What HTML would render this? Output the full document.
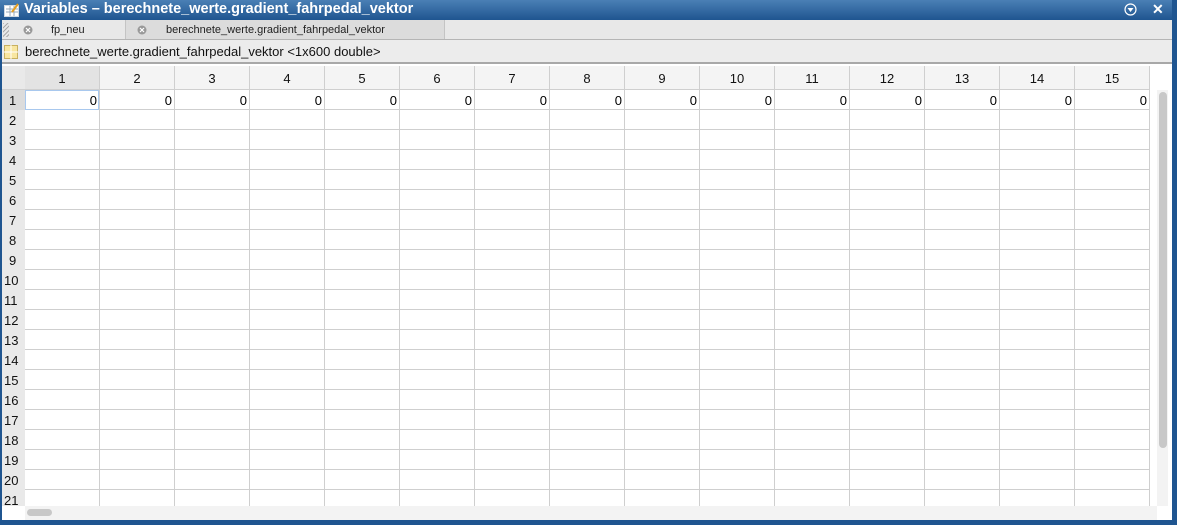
<!DOCTYPE html>
<html><head><meta charset="utf-8"><style>
*{margin:0;padding:0;box-sizing:border-box}
body{width:1177px;height:525px;overflow:hidden;background:#fff;font-family:"Liberation Sans",sans-serif;position:relative}
.title{position:absolute;left:0;top:0;width:1177px;height:20px;background:linear-gradient(#4a7fb5,#1f5590);color:#fff;font-weight:bold;font-size:14.5px;line-height:19px}
.tabs{position:absolute;left:0;top:20px;width:1172px;height:20px;background:#e8e8e8;border-bottom:1px solid #b5b5b5;font-size:11px;line-height:19px;color:#222}
.hdr{position:absolute;left:0;top:40px;width:1172px;height:24px;background:#ececec;border-bottom:2px solid #a8a8a8;font-size:13px;line-height:24px;color:#111}
.rb{position:absolute;right:0;top:0;width:5px;height:525px;background:#1f5590}
.bb{position:absolute;left:0;bottom:0;width:1177px;height:5px;background:#1f5590}
.lb{position:absolute;left:0;top:20px;width:2px;height:505px;background:#1f5590}
</style></head><body>
<div class="title"><svg style="position:absolute;left:4px;top:3px" width="16" height="14"><rect x="0.5" y="2.5" width="14" height="11" fill="#fff" stroke="#cfd8e2"/><path d="M2 6h12M2 9h12M6 3v10M10 3v10" stroke="#9ab"/><path d="M8 9L14 1" stroke="#e8a020" stroke-width="2"/></svg><span style="position:absolute;left:24px;top:0">Variables – berechnete_werte.gradient_fahrpedal_vektor</span>
<svg style="position:absolute;left:1124px;top:3px" width="13" height="13"><circle cx="6.5" cy="6.5" r="5.5" fill="none" stroke="#fff" stroke-width="1.2"/><path d="M3.5 5h6l-3 4z" fill="#fff"/></svg>
<span style="position:absolute;left:1152px;top:0;font-size:14px">✕</span></div>
<div class="tabs">
<div style="position:absolute;left:3px;top:3px;width:6px;height:14px;background:repeating-linear-gradient(135deg,#aaa 0 1px,transparent 1px 3px)"></div>
<div style="position:absolute;left:125px;top:0;width:320px;height:19px;background:#dcdcdc;border-left:1px solid #c4c4c4;border-right:1px solid #c4c4c4"></div>
<svg style="position:absolute;left:23px;top:5px" width="10" height="10"><circle cx="5" cy="5" r="4.5" fill="#999"/><path d="M3 3l4 4M7 3l-4 4" stroke="#fff" stroke-width="1.2"/></svg>
<span style="position:absolute;left:51px;top:1px">fp_neu</span>
<svg style="position:absolute;left:137px;top:5px" width="10" height="10"><circle cx="5" cy="5" r="4.5" fill="#999"/><path d="M3 3l4 4M7 3l-4 4" stroke="#fff" stroke-width="1.2"/></svg>
<span style="position:absolute;left:166px;top:1px">berechnete_werte.gradient_fahrpedal_vektor</span></div>
<div class="hdr"><svg style="position:absolute;left:4px;top:5px" width="14" height="14"><rect x="0.5" y="0.5" width="13" height="13" fill="#f8e6a0" stroke="#c8b060"/><path d="M7 0v14M0 7h14" stroke="#fff"/></svg><span style="position:absolute;left:25px;top:0">berechnete_werte.gradient_fahrpedal_vektor &lt;1x600 double&gt;</span></div>
<svg style="position:absolute;left:0;top:66px" width="1172" height="454" font-family="Liberation Sans" font-size="13">
<rect x="2" y="0" width="1148" height="23" fill="#f4f4f4"/>
<rect x="2" y="0" width="23" height="440" fill="#e9e9e9"/>
<rect x="25" y="0" width="75" height="23" fill="#e3e3e3"/>
<rect x="2" y="24" width="23" height="20" fill="#dcdcdc"/>
<g stroke="#cfcfcf" stroke-width="1">
<path d="M2 23.5H1150"/>
<path d="M25 43.5H1150M25 63.5H1150M25 83.5H1150M25 103.5H1150M25 123.5H1150M25 143.5H1150M25 163.5H1150M25 183.5H1150M25 203.5H1150M25 223.5H1150M25 243.5H1150M25 263.5H1150M25 283.5H1150M25 303.5H1150M25 323.5H1150M25 343.5H1150M25 363.5H1150M25 383.5H1150M25 403.5H1150M25 423.5H1150"/>
<path d="M99.5 0V440M174.5 0V440M249.5 0V440M324.5 0V440M399.5 0V440M474.5 0V440M549.5 0V440M624.5 0V440M699.5 0V440M774.5 0V440M849.5 0V440M924.5 0V440M999.5 0V440M1074.5 0V440M1149.5 0V440"/>
</g>
<rect x="25.5" y="24.5" width="73" height="19" fill="none" stroke="#a8c8ee"/>
<g text-anchor="middle" fill="#111">
<text x="62" y="17">1</text><text x="137" y="17">2</text><text x="212" y="17">3</text><text x="287" y="17">4</text><text x="362" y="17">5</text><text x="437" y="17">6</text><text x="512" y="17">7</text><text x="587" y="17">8</text><text x="662" y="17">9</text><text x="737" y="17">10</text><text x="812" y="17">11</text><text x="887" y="17">12</text><text x="962" y="17">13</text><text x="1037" y="17">14</text><text x="1112" y="17">15</text>
</g>
<g text-anchor="end" fill="#000">
<text x="97" y="39">0</text><text x="172" y="39">0</text><text x="247" y="39">0</text><text x="322" y="39">0</text><text x="397" y="39">0</text><text x="472" y="39">0</text><text x="547" y="39">0</text><text x="622" y="39">0</text><text x="697" y="39">0</text><text x="772" y="39">0</text><text x="847" y="39">0</text><text x="922" y="39">0</text><text x="997" y="39">0</text><text x="1072" y="39">0</text><text x="1147" y="39">0</text>
</g>
<g fill="#111">
<text x="9" y="39">1</text><text x="9" y="59">2</text><text x="9" y="79">3</text><text x="9" y="99">4</text><text x="9" y="119">5</text><text x="9" y="139">6</text><text x="9" y="159">7</text><text x="9" y="179">8</text><text x="9" y="199">9</text><text x="4" y="219">10</text><text x="4" y="239">11</text><text x="4" y="259">12</text><text x="4" y="279">13</text><text x="4" y="299">14</text><text x="4" y="319">15</text><text x="4" y="339">16</text><text x="4" y="359">17</text><text x="4" y="379">18</text><text x="4" y="399">19</text><text x="4" y="419">20</text><text x="4" y="439">21</text>
</g>
<rect x="2" y="440" width="1170" height="14" fill="#fff"/>
<rect x="25" y="440" width="1132" height="14" fill="#f3f3f3"/>
<rect x="27" y="443" width="25" height="7" rx="3.5" fill="#c8c8c8"/>
<rect x="1150" y="0" width="22" height="440" fill="#fff"/>
<rect x="1157" y="24" width="11" height="416" fill="#f3f3f3"/>
<rect x="1159" y="26" width="8" height="356" rx="4" fill="#c8c8c8"/>
</svg>
<div class="lb"></div><div class="rb"></div><div class="bb"></div>
</body></html>
